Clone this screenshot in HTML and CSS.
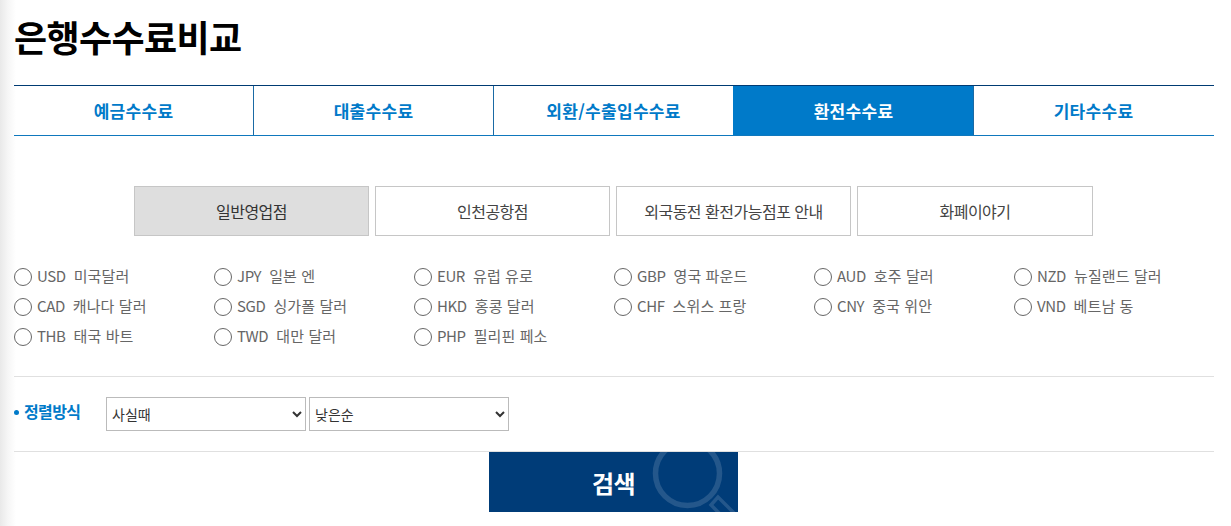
FILE: index.html
```html
<!DOCTYPE html>
<html lang="ko">
<head>
  <meta charset="UTF-8">
  <title>은행수수료비교</title>
  <link rel="stylesheet" href="styles.css">
</head>
<body>
  <div class="wrap">
    <h1>은행수수료비교</h1>

    <ul class="tabs">
      <li><a href="#">예금수수료</a></li>
      <li><a href="#">대출수수료</a></li>
      <li><a href="#">외환/수출입수수료</a></li>
      <li class="on"><a href="#">환전수수료</a></li>
      <li><a href="#">기타수수료</a></li>
    </ul>

    <div class="subtabs">
      <a href="#" class="on">일반영업점</a>
      <a href="#">인천공항점</a>
      <a href="#">외국동전 환전가능점포 안내</a>
      <a href="#">화폐이야기</a>
    </div>

    <div class="currency">
      <label><input type="radio" name="cur"><b>USD</b>미국달러</label>
      <label><input type="radio" name="cur"><b>JPY</b>일본 엔</label>
      <label><input type="radio" name="cur"><b>EUR</b>유럽 유로</label>
      <label><input type="radio" name="cur"><b>GBP</b>영국 파운드</label>
      <label><input type="radio" name="cur"><b>AUD</b>호주 달러</label>
      <label><input type="radio" name="cur"><b>NZD</b>뉴질랜드 달러</label>
      <label><input type="radio" name="cur"><b>CAD</b>캐나다 달러</label>
      <label><input type="radio" name="cur"><b>SGD</b>싱가폴 달러</label>
      <label><input type="radio" name="cur"><b>HKD</b>홍콩 달러</label>
      <label><input type="radio" name="cur"><b>CHF</b>스위스 프랑</label>
      <label><input type="radio" name="cur"><b>CNY</b>중국 위안</label>
      <label><input type="radio" name="cur"><b>VND</b>베트남 동</label>
      <label><input type="radio" name="cur"><b>THB</b>태국 바트</label>
      <label><input type="radio" name="cur"><b>TWD</b>대만 달러</label>
      <label><input type="radio" name="cur"><b>PHP</b>필리핀 페소</label>
    </div>

    <div class="sort">
      <span class="sort-title">정렬방식</span>
      <select><option>사실때</option></select>
      <select><option>낮은순</option></select>
    </div>

    <button type="button" class="btn-search">
      검색
      <svg class="btn-icon" width="110" height="60" viewBox="0 0 110 60" fill="none" stroke="#fff" stroke-opacity="0.14">
        <circle cx="59.5" cy="21.5" r="32" stroke-width="5.5"/>
        <path d="M83 53 L90 45 L115 70 L108 78 Z" stroke-width="3.5"/>
      </svg>
    </button>
  </div>
</body>
</html>
```

FILE: styles.css
```css
* {
  box-sizing: border-box;
}
html, body {
  height: 100%;
}
body {
  margin: 0;
  overflow: hidden;
  background: linear-gradient(to right, #e9e9e9 0, #f6f6f6 8px, #fff 16px);
  font-family: "Noto Sans CJK KR", "Liberation Sans", sans-serif;
}
a {
  text-decoration: none;
}
.wrap {
  width: 1200px;
  margin-left: 14px;
}
h1 {
  margin: 0;
  height: 85px;
  padding-top: 10px;
  font-size: 36px;
  line-height: 52px;
  font-weight: 700;
  letter-spacing: -0.6px;
  color: #000;
}

.tabs {
  display: flex;
  margin: 0;
  padding: 0;
  list-style: none;
  border-top: 1px solid #003b73;
  border-bottom: 1px solid #0f78bd;
}
.tabs li {
  width: 240px;
  height: 49px;
  border-left: 1px solid #1a6aa5;
}
.tabs li:first-child {
  border-left: none;
  width: 239px;
}
.tabs a {
  display: block;
  line-height: 49px;
  text-align: center;
  font-size: 17px;
  font-weight: 700;
  letter-spacing: 0.3px;
  color: #007ac9;
}
.tabs .on {
  background: #007ac9;
  border-left-color: #007ac9;
}
.tabs .on a {
  color: #fff;
}

.subtabs {
  display: flex;
  gap: 6px;
  margin: 50px 0 0 120px;
}
.subtabs a {
  width: 235px;
  height: 50px;
  line-height: 48px;
  text-align: center;
  font-size: 16px;
  letter-spacing: -0.5px;
  color: #444;
  border: 1px solid #c6c6c6;
  background: #fff;
}
.subtabs a:last-child {
  width: 236px;
}
.subtabs .on {
  background: #dedede;
  color: #333;
}

.currency {
  display: grid;
  grid-template-columns: repeat(6, 200px);
  grid-auto-rows: 30px;
  margin-top: 25px;
  padding-bottom: 25px;
  border-bottom: 1px solid #e0e0e0;
}
.currency label {
  display: flex;
  align-items: center;
  padding-bottom: 2px;
  font-size: 15px;
  letter-spacing: 0.1px;
  color: #666;
}
.currency input {
  appearance: none;
  flex: none;
  width: 18px;
  height: 18px;
  margin: 3px 5px 0 0;
  background: #fff;
  border: 1px solid #666;
  border-radius: 50%;
}
.currency b {
  font-weight: 400;
  letter-spacing: -0.4px;
  margin-right: 8px;
}

.sort {
  display: flex;
  align-items: center;
  height: 75px;
  border-bottom: 1px solid #e0e0e0;
}
.sort-title {
  width: 92px;
  margin-top: -7px;
  font-size: 16px;
  font-weight: 700;
  letter-spacing: -0.6px;
  color: #007ac9;
}
.sort-title::before {
  content: "";
  display: inline-block;
  width: 5px;
  height: 5px;
  margin-right: 5px;
  vertical-align: 3px;
  border-radius: 50%;
  background: #007ac9;
}
.sort select {
  width: 200px;
  height: 34px;
  margin-right: 3px;
  padding-left: 1px;
  font-family: inherit;
  font-size: 14px;
  color: #333;
  background-color: #fff;
  border: 1px solid #bbb;
  border-radius: 0;
}

.btn-search {
  position: relative;
  display: block;
  width: 249px;
  height: 60px;
  margin: 0 0 0 475px;
  padding: 0;
  overflow: hidden;
  border: none;
  background: #003c78;
  color: #fff;
  font-family: inherit;
  font-size: 24px;
  font-weight: 700;
  letter-spacing: -0.5px;
}
.btn-icon {
  position: absolute;
  top: 0;
  right: 0;
}
```
